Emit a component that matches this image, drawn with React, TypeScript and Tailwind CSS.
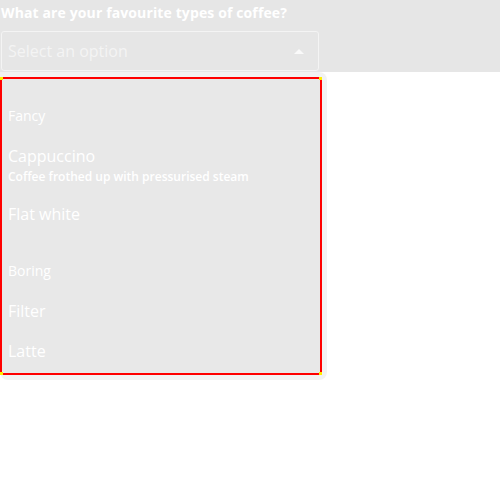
const groups = [
  {
    label: "Fancy",
    options: [
      { name: "Cappuccino", desc: "Coffee frothed up with pressurised steam" },
      { name: "Flat white" },
    ],
  },
  {
    label: "Boring",
    options: [{ name: "Filter" }, { name: "Latte" }],
  },
]

export default function App() {
  return (
    <div className="min-h-[500px] bg-white font-['Open_Sans',sans-serif]">
      <div className="bg-[#e6e6e6] px-px pt-[3px] pb-px">
        <label className="block text-[14px] font-bold leading-[20px] tracking-[0.12px] text-white">
          What are your favourite types of coffee?
        </label>
        <div className="mt-[8px] flex h-[40px] w-[318px] items-center justify-between rounded-[3px] border border-[#f4f4f4] bg-[#e6e6e6] pl-[6px] pr-[14px]">
          <span className="text-[16px] text-[#f4f4f4]">Select an option</span>
          <svg width="10" height="6" viewBox="0 0 10 6">
            <path d="M0 6 L5 1 L10 6 Z" fill="#fafafa" />
          </svg>
        </div>
      </div>
      <div className="w-[327px] rounded-b-[8px] rounded-tr-[8px] bg-[#f2f2f2] py-[5px] pr-[5px]">
        <div className="relative border-2 border-[#ff0000] bg-[#e8e8e8] pb-[2px]">
          <span className="absolute -left-[2px] -top-[2px] h-[3px] w-[3px] bg-[#ffee00]" />
          <span className="absolute -right-[2px] -top-[2px] h-[3px] w-[3px] bg-[#ffee00]" />
          <span className="absolute -left-[2px] -bottom-[2px] h-[3px] w-[3px] bg-[#ffee00]" />
          <span className="absolute -right-[2px] -bottom-[2px] h-[3px] w-[3px] bg-[#ffee00]" />
          {groups.map((g) => (
            <div key={g.label} className="pt-[19px]">
              <div className="px-[6px] pt-[8px] pb-[10px] text-[14px] font-medium leading-[20px] text-white">{g.label}</div>
              {g.options.map((o) => (
                <div key={o.name} className="px-[6px] py-[8px] text-white">
                  <div className="text-[16px] leading-[24px]">{o.name}</div>
                  {o.desc && (
                    <div className="text-[12px] font-semibold leading-[18px]">{o.desc}</div>
                  )}
                </div>
              ))}
            </div>
          ))}
        </div>
      </div>
    </div>
  )
}
